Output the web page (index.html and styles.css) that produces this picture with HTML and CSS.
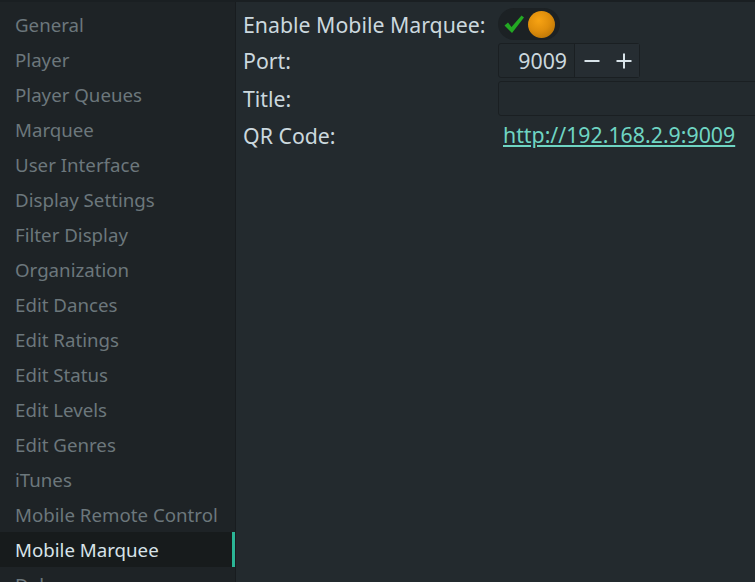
FILE: index.html
```html
<!DOCTYPE html>
<html>
<head>
<meta charset="utf-8">
<link rel="stylesheet" href="styles.css">
</head>
<body>
<div class="app">
  <nav class="sidebar">
    <div class="item">General</div>
    <div class="item">Player</div>
    <div class="item">Player Queues</div>
    <div class="item">Marquee</div>
    <div class="item">User Interface</div>
    <div class="item">Display Settings</div>
    <div class="item">Filter Display</div>
    <div class="item">Organization</div>
    <div class="item">Edit Dances</div>
    <div class="item">Edit Ratings</div>
    <div class="item">Edit Status</div>
    <div class="item">Edit Levels</div>
    <div class="item">Edit Genres</div>
    <div class="item">iTunes</div>
    <div class="item">Mobile Remote Control</div>
    <div class="item selected">Mobile Marquee</div>
    <div class="item">Debug</div>
  </nav>
  <main class="content">
    <div class="form">
      <div class="label">Enable Mobile Marquee:</div>
      <div class="ctrl">
        <div class="toggle">
          <svg class="check" width="22" height="22" viewBox="0 0 22 22"><path d="M1.5 12.5 L5 9.5 L8.5 14 L18.5 2.5 L21 4.5 L9 20 Z" fill="#23a823"/></svg>
          <span class="knob"></span>
        </div>
      </div>
      <div class="label">Port:</div>
      <div class="ctrl">
        <div class="spin">
          <div class="spin-value">9009</div>
          <div class="spin-btns">
            <svg class="btn" width="16" height="16" viewBox="0 0 16 16"><path d="M0.5 8 H15.5" stroke="#d8e3e9" stroke-width="2"/></svg>
            <svg class="btn" width="16" height="16" viewBox="0 0 16 16"><path d="M0.5 8 H15.5 M8 0.5 V15.5" stroke="#d8e3e9" stroke-width="2"/></svg>
          </div>
        </div>
      </div>
      <div class="label">Title:</div>
      <div class="ctrl"><div class="textfield"></div></div>
      <div class="label">QR Code:</div>
      <div class="ctrl"><a class="link" href="#">http://192.168.2.9:9009</a></div>
    </div>
  </main>
</div>
</body>
</html>
```
FILE: styles.css
```css
html, body {
  margin: 0;
  padding: 0;
  height: 100%;
  overflow: hidden;
  background: #232a2e;
  font-family: "Noto Sans", "Open Sans", sans-serif;
}
.app {
  display: flex;
  height: 582px;
  border-top: 2px solid #1a1f22;
  box-sizing: border-box;
}
.sidebar {
  width: 235px;
  flex: none;
  background: #1e2326;
  border-right: 1px solid #181c1f;
  padding-top: 5px;
  overflow: hidden;
  font-size: 18.7px;
}
.item {
  height: 35px;
  line-height: 35px;
  padding-left: 15px;
  color: #6c777c;
  white-space: nowrap;
}
.item.selected {
  background: #171b1c;
  color: #d8e3e9;
  box-shadow: inset -3px 0 0 #2bb596;
}
.content {
  flex: 1;
  padding: 6px 0 0 7px;
  overflow: hidden;
  font-size: 21.3px;
}
.form {
  display: grid;
  grid-template-columns: 255px 1fr;
  row-gap: 3px;
}
.label {
  color: #cbd8de;
  display: flex;
  align-items: center;
  white-space: nowrap;
}
.ctrl {
  display: flex;
  align-items: center;
  min-height: 32px;
}
.toggle {
  width: 62px;
  height: 32px;
  border-radius: 16px;
  background: #1c2124;
  display: flex;
  align-items: center;
  box-sizing: border-box;
  padding: 0 4px 0 5px;
  gap: 3px;
}
.check {
  display: block;
  flex: none;
}
.knob {
  width: 27px;
  height: 27px;
  border-radius: 50%;
  background: radial-gradient(circle at 40% 35%, #f7a313 0%, #e08e0b 45%, #a96a05 100%);
}
.spin {
  display: flex;
  height: 35px;
  border: 1px solid #1a1f22;
  border-radius: 3px;
  box-sizing: border-box;
  background: #232a2e;
}
.spin-value {
  width: 76px;
  box-sizing: border-box;
  text-align: right;
  padding-right: 7px;
  line-height: 33px;
  color: #cbd8de;
  border-right: 1px solid #1a1f22;
}
.spin-btns {
  display: flex;
  align-items: center;
  background: #262d32;
  width: 64px;
  box-sizing: border-box;
  padding-left: 9px;
  gap: 16px;
}
.btn {
  display: block;
}
.textfield {
  width: 300px;
  height: 35px;
  border: 1px solid #1a1f22;
  border-radius: 3px;
  box-sizing: border-box;
}
.link {
  color: #6fd5c3;
  text-decoration: underline;
  padding-left: 5px;
  line-height: 32px;
}
```
